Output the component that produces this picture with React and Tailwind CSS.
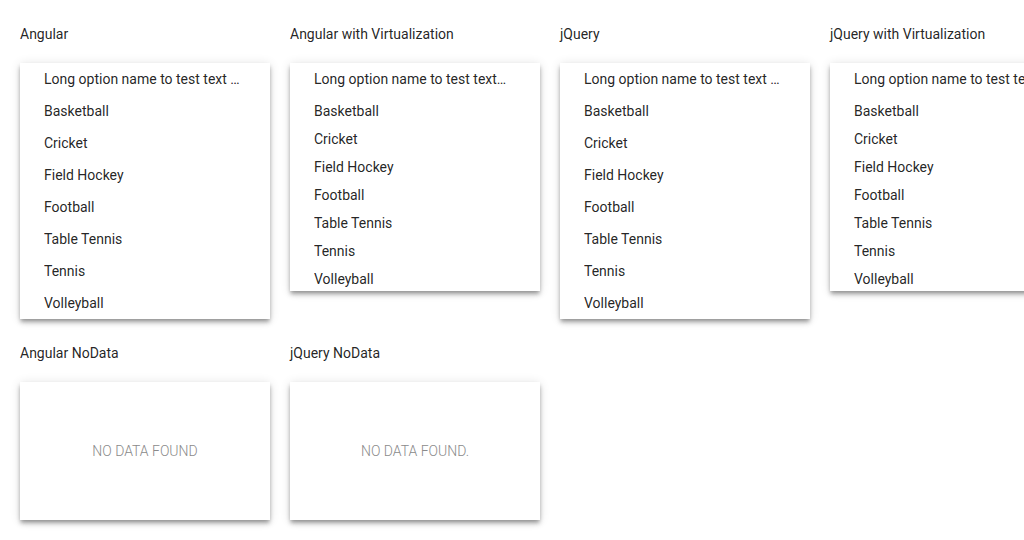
import React from "react";

const sports = [
  "Long option name to test text overflow",
  "Basketball",
  "Cricket",
  "Field Hockey",
  "Football",
  "Table Tennis",
  "Tennis",
  "Volleyball",
];

const shadow =
  "shadow-[0_3px_4px_-1px_rgba(0,0,0,0.3),0_4px_5px_0_rgba(0,0,0,0.14),0_1px_10px_0_rgba(0,0,0,0.12)]";

const Title = ({ children }) => (
  <div className="h-5 text-[14px] leading-5 text-[rgba(0,0,0,0.87)]">{children}</div>
);

// Plain list: every row is 32px
const PlainList = ({ title }) => (
  <div className="w-[250px] shrink-0">
    <Title>{title}</Title>
    <div className={`mt-[19px] w-[250px] bg-white ${shadow}`}>
      {sports.map((s) => (
        <div
          key={s}
          className="flex h-8 items-center overflow-hidden pl-6 pr-[30px] text-[14px] text-[rgba(0,0,0,0.87)]"
        >
          <span className="truncate">{s}</span>
        </div>
      ))}
    </div>
  </div>
);

// Virtualized list: fixed height, 28px rows after the first
const VirtualList = ({ title, clip }) => (
  <div className="w-[250px] shrink-0">
    <Title>{title}</Title>
    <div className={`mt-[19px] h-[228px] w-[250px] overflow-hidden bg-white ${shadow}`}>
      {sports.map((s, i) => (
        <div
          key={s}
          className={`flex items-center pl-6 pr-[32px] text-[14px] text-[rgba(0,0,0,0.87)] ${
            i === 0 ? "mb-[2px] h-8" : "h-7"
          }`}
        >
          <span className={clip ? "whitespace-nowrap" : "truncate"}>{s}</span>
        </div>
      ))}
    </div>
  </div>
);

const NoData = ({ title, text }) => (
  <div className="w-[250px] shrink-0">
    <Title>{title}</Title>
    <div
      className={`mt-[19px] flex h-[138px] w-[250px] items-center justify-center bg-white text-[14px] font-light text-[#8a8a8a] ${shadow}`}
    >
      {text}
    </div>
  </div>
);

export default function App() {
  return (
    <div
      className="h-[540px] w-[1024px] overflow-hidden bg-white"
      style={{ fontFamily: "Roboto, 'Noto Sans', sans-serif" }}
    >
      <div className="flex gap-5 pl-5 pt-6">
        <PlainList title="Angular" />
        <VirtualList title="Angular with Virtualization" />
        <PlainList title="jQuery" />
        <VirtualList title="jQuery with Virtualization" clip />
      </div>
      <div className="flex gap-5 pl-5 pt-[24px]">
        <NoData title="Angular NoData" text="NO DATA FOUND" />
        <NoData title="jQuery NoData" text="NO DATA FOUND." />
      </div>
    </div>
  );
}
